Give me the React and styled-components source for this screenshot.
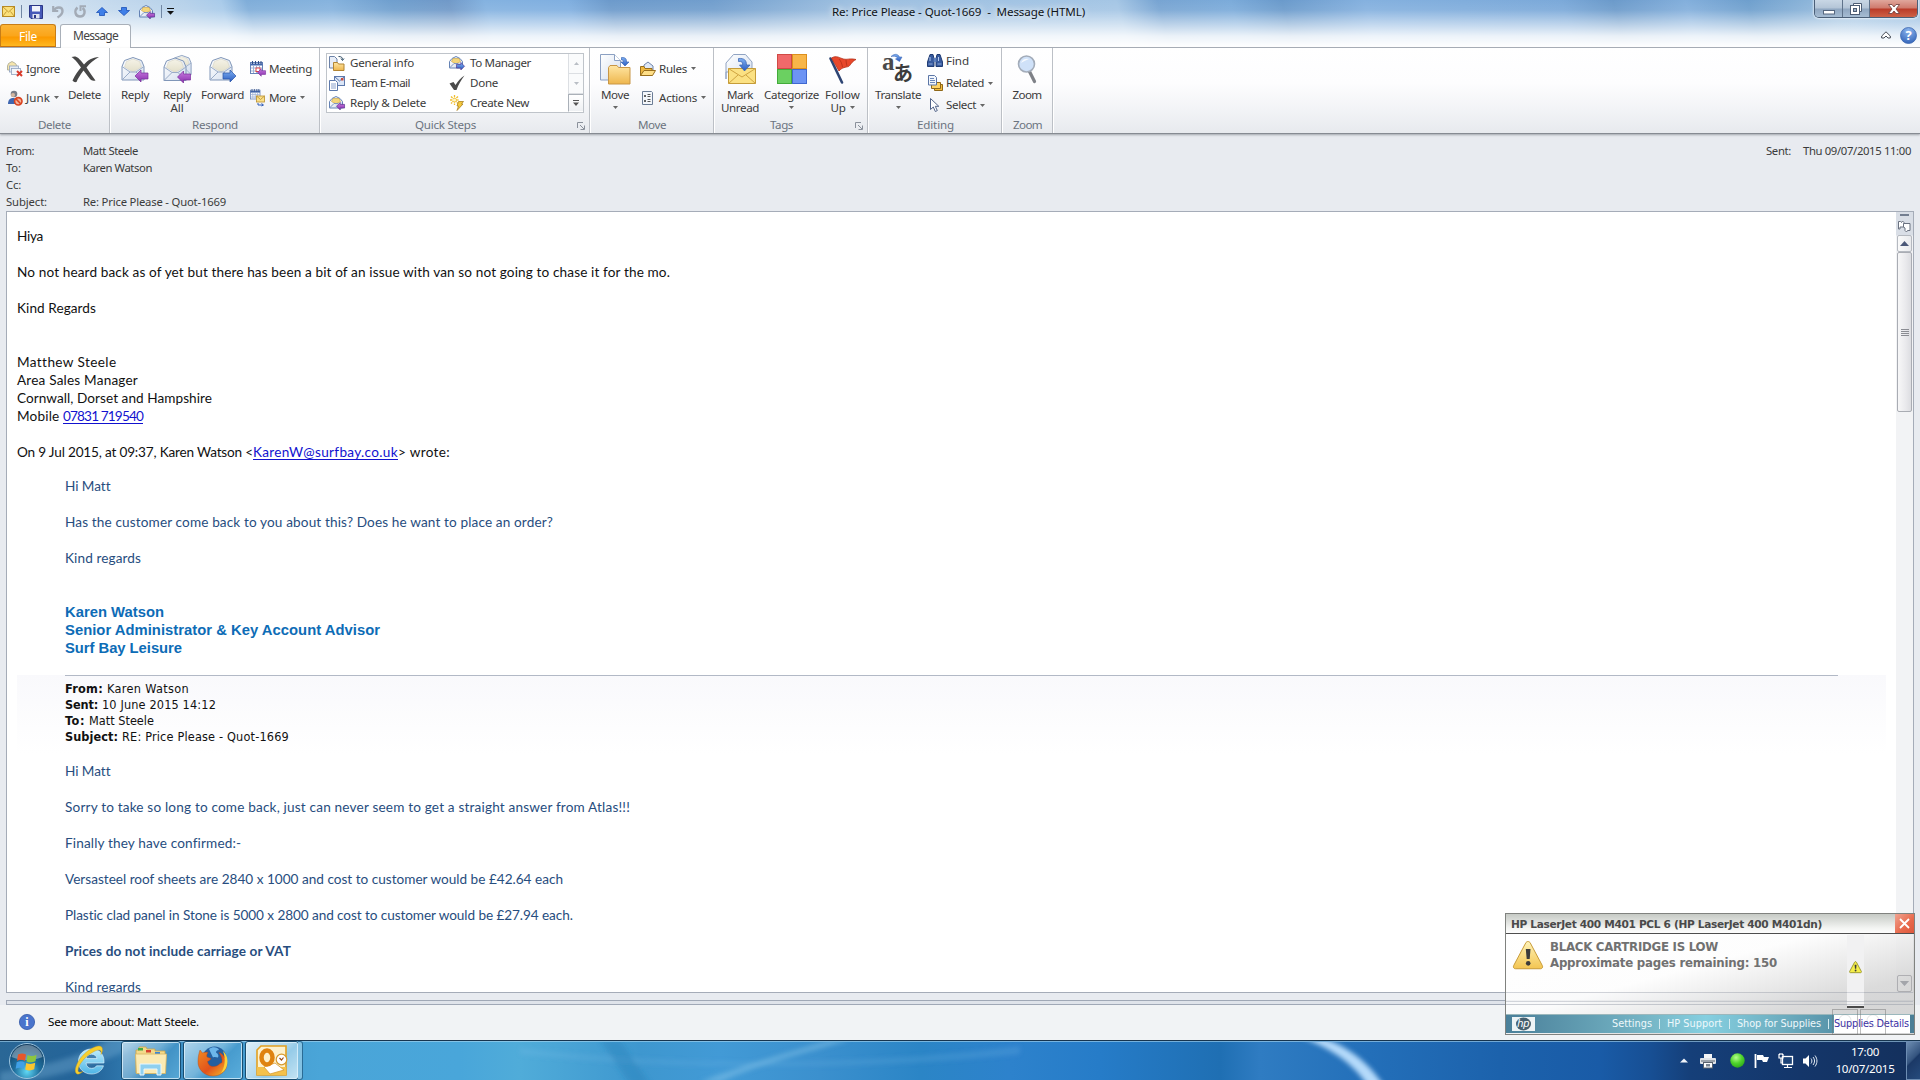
import React, { useLayoutEffect, useRef, useState } from "react";
import styled, { createGlobalStyle, css } from "styled-components";

const UI = `"Noto Sans", "Open Sans", sans-serif`;
const BODY = `Lato, "Open Sans", sans-serif`;
const TAHOMA = `"DejaVu Sans Condensed", "DejaVu Sans", sans-serif`;

const Global = createGlobalStyle`
  * { box-sizing: border-box; }
  html, body { margin: 0; padding: 0; overflow: hidden; }
  svg { display: block; flex: none; overflow: visible; }
`;

/* ---------- text that tracks itself to a measured run length ---------- */

const Run = styled.span`
  display: inline-block;
  white-space: pre;
  flex: none;
  justify-self: start;
`;

function Fit({ w, children }) {
  const ref = useRef(null);
  const [spacing, setSpacing] = useState(0);
  useLayoutEffect(() => {
    const el = ref.current;
    el.style.letterSpacing = "0px";
    const natural = el.getBoundingClientRect().width;
    const s = (w - natural) / el.textContent.length;
    el.style.letterSpacing = `${s}px`;
    setSpacing(s);
  }, [w]);
  return (
    <Run ref={ref} style={{ letterSpacing: `${spacing}px` }}>
      {children}
    </Run>
  );
}

/* ---------- window ---------- */

const Window = styled.div`
  position: relative;
  width: 1920px;
  height: 1080px;
  display: flex;
  flex-direction: column;
  overflow: hidden;
  background: #e8ebf0;
  color: #3b3b3b;
  font: 12px ${UI};
`;

const TitleArea = styled.header`
  flex: none;
  height: 48px;
  border-bottom: 1px solid #a9b0b9;
  background:
    linear-gradient(180deg, rgba(255, 255, 255, 0) 0, rgba(255, 255, 255, 0.08) 10px, rgba(255, 255, 255, 0.85) 36px, #fff 47px),
    radial-gradient(ellipse 90px 40px at 1920px 40px, rgba(90, 150, 210, 0.7), transparent),
    linear-gradient(75deg, #dbe8f3 0, #cfe0f0 60px, #b6d1ea 190px, #a9cbea 225px, #7fadd9 250px, #86b3de 330px, #6f9fce 390px,
      #7099c8 445px, #84b2e0 480px, #80afe0 560px, #6c9acb 600px, #719ecd 700px, #9dbfe0 830px, #a5c6e5 1090px, #77a4d2 1130px,
      #7babda 1200px, #6a9acb 1250px, #85b1df 1330px, #7ba9d9 1520px, #6b9aca 1570px, #83afdc 1640px, #6e9fcd 1700px,
      #a0c3e2 1800px, #b8d2e8 1920px);
`;

const TitleRow = styled.div`
  display: flex;
  height: 24px;
`;

const QuickAccess = styled.div`
  display: flex;
  align-items: center;
  width: 790px;
  padding: 0 0 1px 2px;
`;

const Slot = styled.span`
  display: flex;
  margin-left: ${(p) => p.$ml}px;
`;

const Divider = styled.i`
  width: 1px;
  height: 13px;
  background: #7288a4;
`;

const Caption = styled.div`
  flex: 1;
  padding-left: 42px;
  line-height: 23px;
  font-size: 11.6px;
  color: #101418;
  text-shadow: 0 0 6px rgba(255, 255, 255, 0.8), 0 0 8px rgba(255, 255, 255, 0.7);
`;

const WinButtons = styled.div`
  display: flex;
  width: 104px;
  height: 18px;
  margin-right: 2px;
  border: 1px solid #4b5f77;
  border-top: 0;
  border-radius: 0 0 5px 5px;
  overflow: hidden;
  box-shadow: 0 0 2px 1px rgba(255, 255, 255, 0.6);
`;

const WinButton = styled.div`
  display: flex;
  align-items: center;
  justify-content: center;
  width: ${(p) => p.$w}px;
  border-right: 1px solid #5f738b;
  background: linear-gradient(#c9d7e5 0, #b4c5d7 8px, #8fa6c0 9px, #a9bfd5 18px);
  ${(p) =>
    p.$close &&
    css`
      flex: 1;
      border-right: 0;
      background: linear-gradient(#e0a79c 0, #cf7a6c 8px, #ba3b28 9px, #d0664a 18px);
    `}
`;

const TabRow = styled.div`
  display: flex;
  height: 24px;
  align-items: flex-start;
`;

const FileTab = styled.div`
  width: 56px;
  height: 23px;
  border: 1px solid #c77d17;
  border-bottom-color: #c9720a;
  border-radius: 3px 3px 0 0;
  background: linear-gradient(#fbb436 0, #fba51a 11px, #fb9900 12px, #ffbe28 23px);
  color: #fff;
  text-align: center;
  line-height: 23px;
`;

const MessageTab = styled.div`
  width: 71px;
  height: 24px;
  margin-left: 4px;
  border: 1px solid #a9b0b9;
  border-bottom: 0;
  border-radius: 3px 3px 0 0;
  background: #fff;
  color: #444;
  text-align: center;
  line-height: 22px;
`;

const TabTools = styled.div`
  display: flex;
  align-items: center;
  gap: 9px;
  margin-left: auto;
  height: 22px;
  padding-right: 3px;
`;

/* ---------- ribbon ---------- */

const Ribbon = styled.nav`
  flex: none;
  display: flex;
  height: 86px;
  border-bottom: 1px solid #868b92;
  background: linear-gradient(#fff 0, #fdfdfe 35px, #f3f4f7 60px, #e7eaee 85px);
  box-shadow: 0 1px 2px rgba(90, 96, 104, 0.5);
  position: relative;
`;

const Group = styled.section`
  display: flex;
  flex-direction: column;
  width: ${(p) => p.$w}px;
  border-right: 1px solid #bcc0c6;
  box-shadow: 1px 0 0 #fff;
`;

const GroupBody = styled.div`
  display: flex;
  height: 69px;
`;

const GroupName = styled.div`
  display: flex;
  align-items: center;
  height: 16px;
  padding-left: ${(p) => p.$pl}px;
  color: #6b7480;
  font-size: 11.6px;
  line-height: 16px;
`;

const LauncherSlot = styled.span`
  margin-left: auto;
  margin-right: 4px;
  padding-top: 1px;
`;

const Big = styled.div`
  display: flex;
  flex-direction: column;
  align-items: center;
  width: ${(p) => p.$w}px;
  margin-left: ${(p) => p.$ml}px;
  padding-top: 5px;
  font-size: 11.6px;
  line-height: 13px;
`;

const BigIcon = styled.div`
  display: flex;
  align-items: center;
  justify-content: center;
  height: 32px;
  margin-bottom: 3px;
`;

const Line = styled.div`
  display: flex;
  align-items: center;
  gap: 4px;
  height: 13px;
`;

const Col = styled.div`
  display: flex;
  flex-direction: column;
  margin-left: ${(p) => p.$ml}px;
  padding-top: ${(p) => p.$pt}px;
  width: ${(p) => p.$w || "auto"};
`;

const Item = styled.div`
  display: flex;
  align-items: center;
  gap: 3px;
  height: ${(p) => p.$h}px;
  font-size: 11.6px;
  line-height: 14px;
`;

const ItemText = styled.span`
  display: flex;
  align-items: center;
  gap: 4px;
`;

const Gallery = styled.div`
  display: flex;
  width: 258px;
  height: 60px;
  margin: 5px 0 0 6px;
  border: 1px solid #bfc4ca;
  background: #fff;
`;

const GalleryGrid = styled.div`
  display: grid;
  grid-template-columns: 120px 120px;
  grid-auto-rows: 20px;
  width: 241px;
  padding-left: 2px;
  margin-top: -1px;
`;

const GalleryItem = styled.div`
  display: flex;
  align-items: center;
  gap: 5px;
  font-size: 11.6px;
  line-height: 20px;
`;

const GallerySide = styled.div`
  display: grid;
  grid-template-rows: 20px 20px 1fr;
  flex: 1;
`;

const GalleryStep = styled.div`
  display: flex;
  align-items: center;
  justify-content: center;
  border-left: 1px solid ${(p) => (p.$on ? "#aab0b8" : "#dcdfe3")};
  border-bottom: 1px solid ${(p) => (p.$on ? "transparent" : "#dcdfe3")};
  border-top: ${(p) => (p.$on ? "1px solid #aab0b8" : "0")};
  background: ${(p) => (p.$on ? "linear-gradient(#fff, #eef0f3)" : "#fafbfc")};
`;

/* ---------- message header ---------- */

const Meta = styled.div`
  flex: none;
  display: flex;
  justify-content: space-between;
  height: 77px;
  padding: 8px 9px 0 6px;
  font-size: 11.3px;
`;

const MetaTable = styled.div`
  display: grid;
  grid-template-columns: 77px auto;
  grid-auto-rows: 17px;
  align-content: start;
  line-height: 17px;
`;

const MetaSent = styled.div`
  display: flex;
  gap: 12px;
  line-height: 17px;
`;

/* ---------- reading pane ---------- */

const Pane = styled.main`
  flex: none;
  display: flex;
  width: 1908px;
  height: 782px;
  margin-left: 6px;
  border: 1px solid #a5acb8;
  background: #fff;
`;

const Mail = styled.div`
  flex: 1;
  height: 780px;
  overflow: hidden;
  padding: 15px 10px 0 10px;
  color: #111;
  font-family: ${BODY};
  font-size: 13.6px;
`;

const P = styled.div`
  display: flex;
  height: 18px;
  line-height: 18px;
  margin-bottom: ${(p) => p.$mb || 0}px;
`;

const Quote = styled.div`
  padding-top: ${(p) => p.$pt || 0}px;
  padding-left: 48px;
  color: #274d7e;
`;

const Signature = styled.div`
  height: 54px;
  margin: 36px 0 18px;
  color: #0d6cb6;
  font: bold 14.8px/18px "Liberation Sans", Arial, sans-serif;
`;

const QuotedBlock = styled.div`
  height: 80px;
  background: linear-gradient(#f9f9fc, #fff);
`;

const QuotedHead = styled.div`
  margin: 0 48px 0 48px;
  padding-top: 5px;
  border-top: 1px solid #b2b9c6;
  color: #111;
  font: 12.6px/16px ${TAHOMA};
`;

const HeadLine = styled.div`
  display: flex;
  gap: 4px;
  height: 16px;
`;

const Link = styled.span`
  height: 17px;
  color: #1212cf;
  border-bottom: 1px solid #1212cf;
`;

const Strong = styled.b`
  font-weight: 700;
`;

const ScrollColumn = styled.div`
  display: flex;
  flex-direction: column;
  align-items: center;
  width: 17px;
  background: linear-gradient(#d9dee6 0, #d9dee6 23px, #f2f3f5 24px);
`;

const SplitHandle = styled.i`
  width: 9px;
  height: 2px;
  margin: 2px 0 4px;
  background: #737e90;
`;

const ScrollButton = styled.div`
  display: flex;
  align-items: center;
  justify-content: center;
  width: 15px;
  height: 17px;
  margin-top: ${(p) => p.$mt};
  border: 1px solid #b5b9c0;
  border-radius: 2px;
  background: linear-gradient(90deg, #fafafa, #e9eaed);
`;

const Thumb = styled.div`
  display: flex;
  flex-direction: column;
  align-items: center;
  justify-content: center;
  gap: 1px;
  width: 15px;
  height: 160px;
  border: 1px solid #a9acb3;
  border-radius: 2px;
  background: linear-gradient(90deg, #f7f7f8, #e9e9ec 60%, #dcdde1);
`;

const Grip = styled.i`
  width: 8px;
  height: 1px;
  background: #8b8d93;
`;

const Splitter = styled.div`
  flex: none;
  height: 5px;
  margin: 7px 5px 0 6px;
  border: 1px solid #a0a8b6;
  background: #dfe3ea;
`;

const People = styled.footer`
  flex: none;
  display: flex;
  align-items: center;
  gap: 13px;
  height: 35px;
  padding: 0 0 2px 19px;
  background: #f1f3f5;
  color: #000;
  font-size: 11.6px;
  line-height: 15px;
`;

/* ---------- taskbar ---------- */

const Taskbar = styled.div`
  position: relative;
  flex: none;
  display: flex;
  height: 40px;
  border-top: 1px solid #17354f;
  box-shadow: inset 0 1px 0 rgba(170, 215, 240, 0.6);
  background: linear-gradient(90deg, #2a6796 0, #23649a 90px, #347fb4 140px, #3f94c9 200px, #4aa5d8 320px, #49a6da 460px,
    #50acd9 520px, #3e97cf 640px, #429ad6 720px, #3b90ce 820px, #2b85c6 920px, #2d82cc 1010px, #267cc8 1100px, #1f6fb3 1220px,
    #2f7cc2 1260px, #236fb9 1370px, #1c62ac 1500px, #195ba7 1600px, #174f94 1650px, #153f79 1690px, #14366a 1800px, #14305c 1920px);
`;

const WallGlow = styled.div`
  position: absolute;
  inset: 1px 0 0 0;
  overflow: hidden;
  pointer-events: none;
`;

const Dock = styled.div`
  position: relative;
  display: flex;
  align-items: center;
  padding-left: 8px;
`;

const OrbSlot = styled.div`
  width: 65px;
`;
const IeSlot = styled.div`
  width: 48px;
`;

const TaskButton = styled.div`
  display: flex;
  align-items: center;
  justify-content: center;
  width: ${(p) => p.$w}px;
  height: 39px;
  margin-right: ${(p) => p.$mr}px;
  border: 1px solid #174d70;
  border-radius: 3px;
  box-shadow: inset 0 0 0 1px rgba(225, 243, 252, 0.75);
  background: ${(p) =>
    p.$active
      ? "linear-gradient(135deg, #ddeff9 0, #b5daee 45%, #95cbe8 60%, #c5e4f3 100%)"
      : "linear-gradient(135deg, rgba(215,236,248,.75) 0, rgba(160,208,234,.55) 45%, rgba(80,160,208,.4) 60%, rgba(110,190,230,.55) 100%)"};
`;

const StackEdge = styled.div`
  width: 5px;
  height: 39px;
  margin-left: -1px;
  border: 1px solid #2a6b95;
  border-left: 0;
  border-radius: 0 3px 3px 0;
  background: #84c2e3;
`;

const Tray = styled.div`
  position: relative;
  display: flex;
  align-items: center;
  margin-left: auto;
`;

const TrayIcons = styled.div`
  display: flex;
  align-items: center;
  margin-right: 17px;
`;

const Clock = styled.div`
  display: flex;
  flex-direction: column;
  align-items: center;
  width: 60px;
  margin-right: 11px;
  padding-bottom: 1px;
  color: #fff;
  font-size: 11.6px;
  line-height: 17px;
`;

const ShowDesktop = styled.div`
  width: 14px;
  height: 39px;
  border: 1px solid #6d8db3;
  border-right: 0;
  background: linear-gradient(135deg, #6d8db2 0, #34547f 45%, #1b3967 50%, #264b7c 100%);
`;

/* ---------- printer notification ---------- */

const Toast = styled.aside`
  position: absolute;
  left: 1505px;
  top: 913px;
  width: 410px;
  height: 122px;
  display: flex;
  flex-direction: column;
  border: 1px solid #80827f;
  background: linear-gradient(165deg, rgba(255, 255, 255, 0.92) 0, rgba(253, 253, 253, 0.85) 45%, rgba(213, 213, 213, 0.86) 75%, rgba(205, 205, 205, 0.85) 100%);
`;

const ToastTitle = styled.div`
  display: flex;
  justify-content: space-between;
  height: 20px;
  padding-left: 5px;
  border-bottom: 1px solid #4e4e4e;
  background: linear-gradient(#c6cac5, #f3f4f2 14px, #fdfdfd);
  color: #4a4a4a;
  font: bold 10.6px/20px "DejaVu Sans", Verdana, sans-serif;
`;

const ToastClose = styled.div`
  display: flex;
  align-items: center;
  justify-content: center;
  width: 19px;
  height: 19px;
  background: linear-gradient(135deg, #f0a390, #e8694c 60%, #dd583c);
`;

const ToastBody = styled.div`
  display: flex;
  height: 80px;
  padding: 6px 0 0 6px;
`;

const ToastText = styled.div`
  width: 303px;
  margin-top: -1px;
  padding: 0 0 0 6px;
  color: #717171;
  font: bold 11.8px/16px "DejaVu Sans", Verdana, sans-serif;
`;

const Cartridge = styled.div`
  display: flex;
  align-items: flex-start;
  justify-content: center;
  width: 17px;
  height: 73px;
  margin: -5px 0 0 0;
  padding-top: 26px;
  border-bottom: 2px solid #4a4a4a;
  background: #f1f1f2;
`;

const ToastBar = styled.div`
  display: flex;
  align-items: center;
  height: 19px;
  padding-left: 6px;
  border-top: 1px solid #9bb7bc;
  background: linear-gradient(90deg, #4b809a 0, #5c96ac 60px, #78b9c9 150px, #85cfe0 200px, #6fb0c2 270px, #5793a9 330px, #4a7e96 400px);
  color: #eef8fb;
  font: 10.8px/18px ${TAHOMA};
`;

const BarLinks = styled.div`
  display: flex;
  align-items: center;
  gap: 7px;
  margin-left: 77px;
`;

const Tick = styled.i`
  width: 1px;
  height: 10px;
  background: #d4ebf1;
`;

const Details = styled.div`
  height: 18px;
  width: 76px;
  margin-left: 5px;
  background: #fff;
  color: #3c31a5;
`;

const GhostTiles = styled.div`
  position: absolute;
  left: 326px;
  top: 95px;
  display: flex;
  gap: 2px;
`;

const GhostTile = styled.i`
  width: 26px;
  height: 26px;
  border: 1px solid rgba(110, 110, 110, 0.45);
  background: radial-gradient(circle at 50% 45%, transparent 5px, rgba(120, 120, 120, 0.18) 6px, transparent 7px);
`;

const GhostScroll = styled.div`
  position: absolute;
  left: 391px;
  top: 61px;
  display: flex;
  align-items: center;
  justify-content: center;
  width: 15px;
  height: 17px;
  border: 1px solid rgba(140, 140, 145, 0.5);
  border-radius: 2px;
`;

const GhostLines = styled.div`
  position: absolute;
  left: 0;
  top: 78px;
  width: 407px;
  height: 13px;
  border-top: 1px solid rgba(150, 156, 168, 0.35);
  border-bottom: 1px solid rgba(150, 156, 168, 0.4);
  background: linear-gradient(transparent 8px, rgba(150, 156, 168, 0.4) 8px, rgba(150, 156, 168, 0.4) 9px, transparent 9px);
`;

/* ---------- icons ---------- */

const Caret = ({ c = "#666" }) => (
  <svg width="5" height="3" viewBox="0 0 5 3">
    <path d="M0 0h5L2.5 3z" fill={c} />
  </svg>
);

const ARROW_LEFT = "M0 6L6 0v3h7v6H6v3z";
const ARROW_RIGHT = "M13 6L7 0v3H0v6h7v3z";

const HiddenSvg = styled.svg`
  position: absolute;
`;

const Defs = () => (
  <HiddenSvg width="0" height="0">
    <defs>
      <linearGradient id="purple" x1="0" y1="0" x2="0" y2="1">
        <stop offset="0" stopColor="#c87be0" />
        <stop offset="1" stopColor="#8a2fae" />
      </linearGradient>
      <linearGradient id="blue" x1="0" y1="0" x2="0" y2="1">
        <stop offset="0" stopColor="#7fb0f2" />
        <stop offset="1" stopColor="#2a5cc0" />
      </linearGradient>
      <linearGradient id="folder" x1="0" y1="0" x2="0" y2="1">
        <stop offset="0" stopColor="#ffe6a3" />
        <stop offset="1" stopColor="#eeb64d" />
      </linearGradient>
      <linearGradient id="paper" x1="0" y1="0" x2="1" y2="1">
        <stop offset="0" stopColor="#ffffff" />
        <stop offset="1" stopColor="#d3deee" />
      </linearGradient>
      <linearGradient id="cream" x1="0" y1="0" x2="0" y2="1">
        <stop offset="0" stopColor="#f5f3e8" />
        <stop offset="1" stopColor="#e3dfc9" />
      </linearGradient>
      <radialGradient id="orb" cx=".5" cy=".8" r=".8">
        <stop offset="0" stopColor="#5fd8f5" />
        <stop offset=".45" stopColor="#1f6f9e" />
        <stop offset="1" stopColor="#123a5c" />
      </radialGradient>
      <radialGradient id="lime" cx=".4" cy=".3" r=".8">
        <stop offset="0" stopColor="#b6ff8c" />
        <stop offset=".5" stopColor="#4fd42c" />
        <stop offset="1" stopColor="#27a016" />
      </radialGradient>
      <radialGradient id="help" cx=".5" cy=".2" r=".9">
        <stop offset="0" stopColor="#8db6ee" />
        <stop offset="1" stopColor="#2a5cb4" />
      </radialGradient>
      <linearGradient id="warn" x1="0" y1="0" x2="0" y2="1">
        <stop offset="0" stopColor="#fff3b8" />
        <stop offset="1" stopColor="#f3c552" />
      </linearGradient>
      <linearGradient id="fox" x1="0" y1="0" x2="1" y2="1">
        <stop offset="0" stopColor="#f08a22" />
        <stop offset=".55" stopColor="#e2521b" />
        <stop offset="1" stopColor="#f6c12c" />
      </linearGradient>
      <linearGradient id="ie" x1="0" y1="0" x2="0" y2="1">
        <stop offset="0" stopColor="#bfeefd" />
        <stop offset="1" stopColor="#4db4e6" />
      </linearGradient>
    </defs>
  </HiddenSvg>
);

const OpenMail = ({ x = 0, y = 0, s = 1 }) => (
  <g transform={`translate(${x} ${y}) scale(${s})`}>
    <path d="M.5 9.500L3 3.500 11.500.500 20 3.500 22.500 9.500V23h-22z" fill="url(#paper)" stroke="#8096b8" />
    <path d="M3 10L5 4.500 11.500 2 18 4.500 20 10 11.500 15z" fill="url(#cream)" stroke="#d6d3c2" strokeWidth=".6" />
    <path d="M.5 9.500l8 5.500h6l8-5.500M.5 23l8-8M22.500 23l-8-8" fill="none" stroke="#9aacc8" />
  </g>
);

const SmallMail = ({ arrow, color }) => (
  <svg width="16" height="16" viewBox="0 0 16 16">
    <path d="M.5 6.500L3 3.500 7 1.500l4 2 2.500 3V13H.5z" fill="url(#paper)" stroke="#6482b4" />
    <path d="M2.500 6.500L4 3.500h6l1.500 3L7 9z" fill="#f4d67a" stroke="#caa040" strokeWidth=".6" />
    <path d="M.5 13L5 8.500h4l4.500 4.500" fill="none" stroke="#7c96c2" />
    <g transform="translate(7.500 7.500) scale(.62)">
      <path d={arrow} fill={color} stroke="#4a2a86" strokeWidth="1" />
    </g>
  </svg>
);

const ReplyIcon = () => (
  <svg width="28" height="28" viewBox="0 0 28 28">
    <OpenMail x={0.5} y={2} />
    <path transform="translate(14 15)" d={ARROW_LEFT} fill="url(#purple)" stroke="#7a2e9c" strokeWidth=".7" />
  </svg>
);
const ReplyAllIcon = () => (
  <svg width="29" height="30" viewBox="0 0 29 30">
    <OpenMail x={9} y={1} s={0.85} />
    <OpenMail x={0.5} y={3.5} />
    <path transform="translate(14.500 17)" d={ARROW_LEFT} fill="url(#purple)" stroke="#7a2e9c" strokeWidth=".7" />
  </svg>
);
const ForwardIcon = () => (
  <svg width="28" height="28" viewBox="0 0 28 28">
    <OpenMail x={0.5} y={2} />
    <path transform="translate(14 15)" d={ARROW_RIGHT} fill="url(#blue)" stroke="#2a55a8" strokeWidth=".7" />
  </svg>
);
const DeleteIcon = () => (
  <svg width="30" height="28" viewBox="0 0 30 28">
    <path d="M1.500 2C6 .5 8 1.500 14 9.500 18 5 22 2.500 29 2c-5 3-9.500 6-12.500 10.500C20 18 22.500 21.500 25.500 25.500c-3 .5-4 0-5.500-1.500l-6.500-8.500C10 20 8 23.500 6.500 27c-2 .5-3.500-.5-4-1.500C5 20 7.500 16.500 11 12.500 7.500 7.500 5.500 5 1.500 2z" fill="#474747" />
  </svg>
);
const IgnoreIcon = () => (
  <svg width="16" height="16" viewBox="0 0 16 16">
    <path d="M.5 5l1-2.500L5 .5l3.500 2L10 5v4H.5z" fill="#f5e5ac" stroke="#a6a48e" strokeWidth=".8" />
    <rect x="2.500" y="5" width="9" height="6" fill="#e4ebf5" stroke="#8fa2bf" strokeWidth=".8" />
    <rect x="4.500" y="7.500" width="9" height="6" fill="#f4f7fb" stroke="#8fa2bf" strokeWidth=".8" />
    <path d="M10 10l5 5M15 10l-5 5" stroke="#d93a2b" strokeWidth="2" />
  </svg>
);
const JunkIcon = () => (
  <svg width="16" height="16" viewBox="0 0 16 16">
    <circle cx="7" cy="4" r="3.300" fill="#777c85" />
    <circle cx="6" cy="5" r="2" fill="#d6b7a0" />
    <path d="M1 14c0-4 2-6 5-6s5 2 5 6z" fill="#3f66b0" />
    <circle cx="11.300" cy="11.300" r="3.700" fill="#f5b39c" stroke="#d9431f" strokeWidth="1.600" />
    <path d="M9 9l4.700 4.700" stroke="#d9431f" strokeWidth="1.600" />
  </svg>
);
const Calendar = () => (
  <>
    <rect x=".5" y="1.500" width="12" height="11" fill="#fff" stroke="#6683b8" />
    <path d="M.5 2.500h12v2H.5z" fill="#4468ad" />
    <path d="M2.500 0v3M5.500 0v3M8.500 0v3M11 0v3" stroke="#2f4c86" />
    <path d="M1 7h11M1 10h11M3.500 5v7M6.500 5v7M9.500 5v7" stroke="#9fb2d6" />
  </>
);
const MeetingIcon = () => (
  <svg width="16" height="16" viewBox="0 0 16 16">
    <Calendar />
    <rect x="6" y="7" width="4" height="3.500" fill="#fff" stroke="#d44" />
    <path transform="translate(7.500 7.800) scale(.62)" d={ARROW_LEFT} fill="url(#purple)" stroke="#7a2e9c" />
  </svg>
);
const MoreIcon = () => (
  <svg width="16" height="17" viewBox="0 0 16 17">
    <g transform="scale(.8)">
      <Calendar />
    </g>
    <rect x="6.500" y="7" width="8" height="6" fill="#fbe08a" stroke="#b98e2c" strokeWidth=".8" />
    <path d="M6.500 7l4 3.500 4-3.500" fill="none" stroke="#b98e2c" strokeWidth=".8" />
    <path d="M8 14v2h5M11.500 14.500L13.500 16l-2 1" fill="none" stroke="#2f5cb8" />
  </svg>
);
const CopyMoveIcon = () => (
  <svg width="16" height="16" viewBox="0 0 16 16">
    <path d="M.5 1.500h5l2.500 2.500v9H.5z" fill="#e7edf7" stroke="#6c82a8" />
    <path d="M9.500 1.500c3 0 4 1 4 3M12 3.500l1.500 2 1.500-2" fill="none" stroke="#2c4a63" />
    <path d="M4.500 7.500h4l1 1.500H15v6.500H4.500z" fill="url(#folder)" stroke="#b28533" />
  </svg>
);
const TeamIcon = () => (
  <svg width="16" height="16" viewBox="0 0 16 16">
    <rect x="5.500" y="1.500" width="10" height="9" fill="#dbe6f7" stroke="#5d79ab" />
    <path d="M5.500 1.500l5 4.500 5-4.500" fill="none" stroke="#5d79ab" />
    <rect x="12" y="3" width="2.500" height="2.500" fill="#c84a3e" />
    <path d="M.5 5.500h6l2 2v8h-8z" fill="#fff" stroke="#5d79ab" />
    <path d="M2 9h5M2 11h5M2 13h5" stroke="#8ba2cc" />
  </svg>
);
const CheckIcon = () => (
  <svg width="16" height="16" viewBox="0 0 16 16">
    <path d="M.5 8.500l4-1.500 2 3C9 6 11.500 3 15.500.500 12 5 9.500 9.500 7.500 15H5z" fill="#4b4b4b" />
  </svg>
);
const CreateIcon = () => (
  <svg width="16" height="16" viewBox="0 0 16 16">
    <path d="M5.500 0v10M1 5h9M2 1.500l7 7M9 1.500l-7 7" stroke="#efbd2d" strokeWidth="1.300" strokeDasharray="2.200 .6" />
    <circle cx="5.500" cy="5" r="1.600" fill="#fff6c8" />
    <path d="M9.500 6.500h5L12.500 9H14l-6 6.500L9.500 11H8z" fill="#f5c93b" stroke="#a98122" strokeWidth=".8" />
  </svg>
);
const MoveIcon = () => (
  <svg width="31" height="31" viewBox="0 0 31 31">
    <path d="M.5.500h14l6 6v19.500H.5z" fill="url(#paper)" stroke="#8ba0c2" />
    <path d="M14.500.500v6h6" fill="#fff" stroke="#8ba0c2" />
    <path d="M21.500 3.500c4 0 5 1 5 4.500h2.500l-4 4-4-4h2.500c0-1.500-.5-2-2-2z" fill="url(#blue)" stroke="#3a66b5" strokeWidth=".7" />
    <path d="M8.500 13.500l1.500-2h7l1.500 2h11.500v16.500H8.500z" fill="url(#folder)" stroke="#c89646" />
  </svg>
);
const RulesIcon = () => (
  <svg width="16" height="16" viewBox="0 0 16 16">
    <path d="M4 8V4l4-3 5 4v4" fill="#dfe8f6" stroke="#6d83ab" />
    <path d="M.5 5.500h3.500l1 2h7v7H.5z" fill="#f0b942" stroke="#9a6f1c" />
    <path d="M.5 14.500L4 9.500h11.500l-3 5z" fill="#ffdf87" stroke="#9a6f1c" />
  </svg>
);
const ActionsIcon = () => (
  <svg width="16" height="16" viewBox="0 0 16 16">
    <path d="M2.500 1.500h9l1 1v12h-10z" fill="#f4f7fb" stroke="#6b7c95" />
    <circle cx="5" cy="6" r="1" fill="#333" />
    <circle cx="5" cy="11" r="1" fill="#333" />
    <path d="M7.500 4.500h3M7.500 6.500h3M7.500 9.500h3M7.500 11.500h3" stroke="#555" />
  </svg>
);
const UnreadIcon = () => (
  <svg width="31" height="31" viewBox="0 0 31 31">
    <path d="M1 25V9L8.500.5h12L27 8v10H1z" fill="url(#paper)" stroke="#90a3c2" />
    <path d="M3.500 14.500h27v15h-27z" fill="#fbe183" stroke="#c59c39" />
    <path d="M3.500 14.500L17 23l13.500-8.500M3.500 29.500l9.500-8.500M30.500 29.500L21 21" fill="none" stroke="#cfa441" />
    <path d="M13.500 4.500c6-.5 8 2 8 6.500h3.500l-5.500 6-5-6h3.200c0-3-1-4-4.200-3.500z" fill="url(#blue)" stroke="#335fae" strokeWidth=".7" />
  </svg>
);
const CategorizeIcon = () => (
  <svg width="30" height="30" viewBox="0 0 30 30">
    <rect x=".5" y=".5" width="14" height="14" fill="#f0696a" stroke="#d04a45" />
    <rect x="15.500" y=".5" width="14" height="14" fill="#f8b649" stroke="#dd8f1c" />
    <rect x=".5" y="15.500" width="14" height="14" fill="#6bd061" stroke="#42ab3a" />
    <rect x="15.500" y="15.500" width="14" height="14" fill="#6d94f4" stroke="#3f68d0" />
  </svg>
);
const FlagIcon = () => (
  <svg width="28" height="29" viewBox="0 0 28 29">
    <path d="M1.500 3.500l11.500 24" stroke="#2d4473" strokeWidth="2.600" strokeLinecap="round" />
    <path d="M2.500 3c5-3 8 0 12 1s6-1 12.500.5C22 7 22 10 19.500 11.500c-3 1-6 .5-9.500 4.500z" fill="#e8472a" stroke="#b42f16" strokeWidth=".8" />
    <path d="M10 4c2 2 3 5 3.500 8M17 5c0 2 .5 4 1 6" stroke="#b42f16" strokeWidth=".8" fill="none" />
  </svg>
);
const LatinGlyph = styled.text`
  font: bold 25px "Liberation Serif", "Times New Roman", serif;
  fill: #4a4a4a;
`;
const KanaGlyph = styled.text`
  font: bold 20px "Noto Sans CJK JP", sans-serif;
  fill: #3c3c3c;
`;
const TranslateIcon = () => (
  <svg width="32" height="32" viewBox="0 0 32 32">
    <LatinGlyph x="0" y="17">a</LatinGlyph>
    <KanaGlyph x="11" y="28">あ</KanaGlyph>
    <path d="M9 3.500C13 0 16 1 17.500 4H20l-2.500 4.500L13.500 6l2-1C14 3 12 3 9 3.500z" fill="url(#blue)" stroke="#335fae" strokeWidth=".5" />
  </svg>
);
const FindIcon = () => (
  <svg width="16" height="16" viewBox="0 0 16 16">
    <path d="M3 1.500h3l1 4v8H.5V9zM13 1.500h-3l-1 4v8h6.500V9z" fill="#375a9e" stroke="#203c74" />
    <rect x="6.500" y="5" width="3" height="4" fill="#5f80bd" />
    <path d="M3 4v4M11.500 4v4" stroke="#b5c9ec" />
    <path d="M1.500 11h4M10.500 11h4" stroke="#8fa9d8" />
  </svg>
);
const RelatedIcon = () => (
  <svg width="16" height="16" viewBox="0 0 16 16">
    <path d="M7.500 8.500h3l1 1h4v6h-8z" fill="#f4bd3b" stroke="#8f6819" />
    <path d="M4.500 6.500h3l1 1h5v6h-9z" fill="#ffd466" stroke="#8f6819" />
    <path d="M1.500.5h6l2 2v7.500h-8z" fill="#f2f6fc" stroke="#5c76a6" />
    <path d="M3 3.500h4M3 5.500h5M3 7.500h5" stroke="#6d88ba" />
  </svg>
);
const SelectIcon = () => (
  <svg width="16" height="16" viewBox="0 0 16 16">
    <path d="M3.500 1.500v11l2.800-2.500 2 4.500 2-.9-2-4.300h3.500z" fill="#fff" stroke="#53658a" />
  </svg>
);
const ZoomIcon = () => (
  <svg width="20" height="29" viewBox="0 0 20 29">
    <path d="M12.500 16.500l5 10" stroke="#7e8187" strokeWidth="3.200" strokeLinecap="round" />
    <circle cx="9.500" cy="9" r="8" fill="#cfe1f8" stroke="#a3acb9" strokeWidth="1.600" />
    <path d="M4 8c1-4 5-5 8-4-3 1-6 3-8 4z" fill="#fff" opacity=".8" />
  </svg>
);
const Launcher = () => (
  <svg width="8" height="8" viewBox="0 0 8 8">
    <path d="M.5 6V.5H6M3 3l4 4M7.500 3.500v4h-4" fill="none" stroke="#8a919b" />
  </svg>
);

const AppMail = () => (
  <svg width="13" height="12" viewBox="0 0 13 12">
    <rect x=".5" y=".5" width="12" height="10" fill="#fbe07a" stroke="#b78a24" />
    <path d="M.5.5l6 5.500 6-5.500M.5 10.500l4-5M12.500 10.500l-4-5" fill="none" stroke="#b78a24" strokeWidth=".8" />
  </svg>
);
const SaveIcon = () => (
  <svg width="14" height="14" viewBox="0 0 14 14">
    <path d="M.5.500h13v13H2L.5 12z" fill="#4659b8" stroke="#2b3786" />
    <rect x="3" y="1" width="8" height="5.500" fill="#f0f3fb" />
    <rect x="3.500" y="9" width="7" height="4.500" fill="#dfe4ef" />
    <rect x="5" y="10" width="2" height="3" fill="#2b3786" />
  </svg>
);
const UndoIcon = () => (
  <svg width="12" height="13" viewBox="0 0 12 13">
    <path d="M1.200 1v5h5" fill="none" stroke="#a3abb6" strokeWidth="2.200" />
    <path d="M2 5.500C4 1.500 10.500 1.500 10.500 6c0 3-1.500 4.500-5 6.500" fill="none" stroke="#a3abb6" strokeWidth="2.400" />
  </svg>
);
const RedoIcon = () => (
  <svg width="12" height="13" viewBox="0 0 12 13">
    <path d="M3.500 2.500C0 5.500 1 11.500 6 11.500s6-6 2.500-8.500" fill="none" stroke="#a3abb6" strokeWidth="2.400" />
    <path d="M6.500 6V1.200H12" fill="none" stroke="#a3abb6" strokeWidth="2" />
  </svg>
);
const UpArrow = () => (
  <svg width="12" height="9" viewBox="0 0 12 9">
    <path d="M6 .5L11.500 5.500H8.500V8.500h-5v-3H.5z" fill="#3f7fe8" stroke="#1d52b8" strokeWidth=".8" />
  </svg>
);
const DownArrow = () => (
  <svg width="12" height="9" viewBox="0 0 12 9">
    <path d="M6 8.500L11.500 3.500H8.500V.5h-5v3H.5z" fill="#3f7fe8" stroke="#1d52b8" strokeWidth=".8" />
  </svg>
);
const Customize = () => (
  <svg width="7" height="7" viewBox="0 0 7 7">
    <path d="M0 .5h7" stroke="#111" />
    <path d="M0 3h7L3.500 6.800z" fill="#111" />
  </svg>
);
const MinGlyph = () => (
  <svg width="12" height="14" viewBox="0 0 12 14">
    <rect x=".5" y="8.500" width="11" height="3.500" fill="#fff" stroke="#56677e" />
  </svg>
);
const MaxGlyph = () => (
  <svg width="12" height="12" viewBox="0 0 12 12">
    <path d="M3.500 2.500v-2h8v8h-2" fill="#fff" stroke="#4d5d74" />
    <rect x=".5" y="2.500" width="9" height="9" fill="#fff" stroke="#4d5d74" />
    <rect x="3.500" y="5.500" width="3" height="3" fill="#9fb2c8" stroke="#4d5d74" />
  </svg>
);
const CloseGlyph = () => (
  <svg width="12" height="10" viewBox="0 0 12 10">
    <path d="M.5.500h3.500l2 2.500L8 .5h3.500L8 5l3.500 4.500H8L6 7 4 9.500H.500L4 5z" fill="#fff" stroke="#6b3a3a" strokeWidth=".8" />
  </svg>
);
const CollapseGlyph = () => (
  <svg width="10" height="8" viewBox="0 0 10 8">
    <path d="M5 .8L9.300 5v2H7L5 5 3 7H.7V5z" fill="#fff" stroke="#444b55" strokeWidth="1" />
  </svg>
);
const HelpText = styled.text`
  font: bold 13px ${UI};
  fill: #fff;
  text-anchor: middle;
`;
const HelpGlyph = () => (
  <svg width="17" height="17" viewBox="0 0 17 17">
    <circle cx="8.500" cy="8.500" r="8" fill="url(#help)" stroke="#3d68b0" strokeWidth=".8" />
    <HelpText x="8.500" y="13.200">?</HelpText>
  </svg>
);
const InfoText = styled.text`
  font: bold 12px "Liberation Serif", serif;
  fill: #fff;
  text-anchor: middle;
`;
const InfoGlyph = () => (
  <svg width="16" height="16" viewBox="0 0 16 16">
    <circle cx="8" cy="8" r="7.600" fill="#4a74cc" stroke="#3459a8" strokeWidth=".8" />
    <InfoText x="8" y="12">i</InfoText>
  </svg>
);
const BrowseGlyph = () => (
  <svg width="13" height="13" viewBox="0 0 13 13">
    <path d="M.5 1.500h2l1 1 1-1.500 1.500 1.500V7h-4v2H.5z" fill="#fff" stroke="#6b7280" />
    <path d="M5.500 3.500h6.500v7H9.500l-1 1.500-1.500-1.500V8L5.500 7z" fill="#fff" stroke="#6b7280" />
  </svg>
);
const ScrollArrow = ({ down, c = "#4b5878" }) => (
  <svg width="9" height="5" viewBox="0 0 9 5">
    <path d={down ? "M0 0h9L4.500 5z" : "M0 5h9L4.500 0z"} fill={c} />
  </svg>
);

const Orb = () => (
  <svg width="38" height="38" viewBox="0 0 38 38">
    <circle cx="19" cy="19" r="17.500" fill="url(#orb)" stroke="#9cc4de" strokeWidth="1" />
    <path d="M3.500 15a16 16 0 0 1 31 0c-9 4-22 4-31 0z" fill="#fff" opacity=".33" />
    <path d="M10 12.500c3-1.500 5.500-1.500 8 0l-1 6.500c-2.500-1.500-5-1.500-8-.2z" fill="#e8572b" />
    <path d="M19.500 13c3 1.500 6 1.500 9-.3l-1 6.500c-3 1.500-6 1.500-9 .2z" fill="#8dc63f" />
    <path d="M8.700 20.300c3-1.300 5.500-1.300 8 .2l-1 6.500c-2.500-1.500-5-1.500-8-.2z" fill="#3fa0e6" />
    <path d="M18.200 21c3 1.300 6 1.300 9-.2l-1 6.500c-3 1.500-6 1.500-9 .2z" fill="#fbc62e" />
  </svg>
);
const IeIcon = () => (
  <svg width="34" height="34" viewBox="0 0 34 34">
    <path d="M31 19H13c.3 3.500 2.500 5.300 5.500 5.300 2.300 0 4-.8 5-2.500h7C28.800 26.800 24.500 30 18.500 30 11 30 5.500 25 5.500 17.500S11 5 18.500 5 31 10 31 17.500zM13 14.500h11C23.500 11.800 21.500 10.200 18.500 10.200S13.500 11.800 13 14.500z" fill="url(#ie)" stroke="#e7f8ff" strokeWidth=".6" fillRule="evenodd" />
    <path d="M4 30C-1 27 6 12 17 5.500c7-4.500 13-5 12.500 1-.2 1.500-.7 3-1.500 4 1-4-1-6-7-3C12 12 5 21 5 26.500c0 2 2 2 5 1C7.500 29.500 5.500 30.500 4 30z" fill="#f7cf2d" stroke="#c9941a" strokeWidth=".4" />
  </svg>
);
const ExplorerIcon = () => (
  <svg width="34" height="30" viewBox="0 0 34 30">
    <path d="M2 4h3V1h7l1 2h8v2h10v22H2z" fill="#f3d98a" stroke="#c9a24a" strokeWidth=".8" />
    <rect x="4" y="2" width="5" height="2.500" fill="#49a942" />
    <rect x="12" y="4" width="5" height="2.500" fill="#d8412f" />
    <rect x="21" y="6" width="5" height="2.500" fill="#3a86d8" />
    <path d="M1.500 8H32.500l-1 19.500h-29z" fill="#fbeab3" stroke="#d7b561" strokeWidth=".8" />
    <path d="M6 18h21v11h-4v-6H10v6H6z" fill="#8fd0ef" stroke="#e7f7ff" strokeWidth="1" />
  </svg>
);
const FirefoxIcon = () => (
  <svg width="32" height="32" viewBox="0 0 32 32">
    <circle cx="17.500" cy="13.500" r="12" fill="#255f9f" />
    <path d="M12 4c4-3 9-1.500 10 1-2 0-3 1-3 2.500 2 1 3 3 2 5-2 0-3-1-5 0z" fill="#6db6ea" />
    <path d="M3 5l2.500 3C7 7 9 7 11 7.500 10 9 9.500 10 10 12l4 1.500c-.5 1.500-2 2.200-3.500 3C11 20 14 22 17 21.500c4 0 5-3 8-4 .5-4-1-7-3-10 6 2.500 9 9 7.500 14.500C27.500 28 22 31 16 31 7 31 .5 24 1 16c0-4 1-8 2-11z" fill="url(#fox)" stroke="#b6420f" strokeWidth=".4" />
    <path d="M26 6c5 4 5.500 12 3 17-1 2-3 4-5 5 4-6 5-14 2-22z" fill="#fbd13a" />
  </svg>
);
const OutlookIcon = () => (
  <svg width="32" height="32" viewBox="0 0 32 32">
    <path d="M1 5l4-4h25v29H1z" fill="#fdf1cd" stroke="#e2a020" strokeWidth="1.600" />
    <path d="M1 22h29v8H1z" fill="#f4c14b" />
    <path d="M8 22l11-4 9 7-14 4z" fill="#fff" stroke="#d69b31" strokeWidth=".8" />
    <ellipse cx="11" cy="12.500" rx="5.500" ry="7" fill="none" stroke="#df8310" strokeWidth="4.500" />
    <circle cx="25.500" cy="14.500" r="5.300" fill="#fff" stroke="#d69b31" strokeWidth="1.200" />
    <path d="M23.500 13l2 2 2-2.500" fill="none" stroke="#9a4b16" strokeWidth="1.200" />
  </svg>
);

const PrinterIcon = () => (
  <svg width="16" height="16" viewBox="0 0 16 16">
    <rect x="4" y="1" width="8" height="4" fill="#f4f6f8" />
    <rect x="0" y="5" width="16" height="6" rx="1" fill="#dfe3e8" />
    <path d="M1 8h14" stroke="#59626e" />
    <rect x="3.500" y="9.500" width="9" height="5.500" fill="#fff" stroke="#59626e" />
    <rect x="6" y="11" width="4" height="2.500" fill="#7a8592" />
  </svg>
);
const GreenIcon = () => (
  <svg width="15" height="15" viewBox="0 0 15 15">
    <circle cx="7.500" cy="7.500" r="7.200" fill="url(#lime)" />
  </svg>
);
const ActionFlag = () => (
  <svg width="15" height="16" viewBox="0 0 15 16">
    <path d="M1.500 1v14" stroke="#fff" strokeWidth="1.800" />
    <path d="M3 2h6l1 2h5l-2 5H9L8 7H3z" fill="#fff" />
  </svg>
);
const NetIcon = () => (
  <svg width="16" height="16" viewBox="0 0 16 16">
    <rect x="4.500" y="3.500" width="10" height="8" fill="#1d4377" stroke="#fff" strokeWidth="1.300" />
    <path d="M9.500 12v2M6 14.500h8M1 1v4h4V1M3 5v5h1.500M2 0v2M4 0v2" fill="none" stroke="#fff" strokeWidth="1.200" />
  </svg>
);
const SpeakerIcon = () => (
  <svg width="16" height="16" viewBox="0 0 16 16">
    <path d="M1 5.500h2.500L7 2v12l-3.500-3.500H1z" fill="#fff" />
    <path d="M9 5.500c1.200 1.500 1.200 3.500 0 5M11 4c2 2.500 2 5.500 0 8M13 2.500c2.600 3.500 2.600 7.500 0 11" fill="none" stroke="#e3ebf4" strokeWidth="1" />
  </svg>
);
const TrayArrow = () => (
  <svg width="8" height="5" viewBox="0 0 8 5">
    <path d="M0 4.500h8L4 .5z" fill="#f1f5fa" />
  </svg>
);
const WarnIcon = ({ w, fill = "url(#warn)", stroke = "#c89b39", sw = 1 }) => (
  <svg width={w} height={w * 0.94} viewBox="0 0 32 30">
    <path d="M16 1.500c1 0 1.800.5 2.300 1.500l12 22.500c.8 1.700 0 3.200-1.800 3.200h-25c-1.800 0-2.600-1.500-1.800-3.200L13.700 3c.5-1 1.300-1.500 2.300-1.500z" fill={fill} stroke={stroke} strokeWidth={sw} />
    <path d="M13.800 9h4.700l-.8 10h-3z" fill="#3b3b3b" />
    <circle cx="16.200" cy="23.300" r="2.300" fill="#3b3b3b" />
  </svg>
);
const HpText = styled.text`
  font: italic 11px "Liberation Sans", Arial, sans-serif;
  fill: #fff;
  text-anchor: middle;
`;
const HpIcon = () => (
  <svg width="23" height="14" viewBox="0 0 23 14">
    <rect width="23" height="14" fill="#eef4f6" />
    <ellipse cx="11.500" cy="7" rx="7.500" ry="6.400" fill="#46606f" />
    <HpText x="11.300" y="10">hp</HpText>
  </svg>
);
const ToastX = () => (
  <svg width="11" height="11" viewBox="0 0 11 11">
    <path d="M1 1l9 9M10 1l-9 9" stroke="#fff" strokeWidth="1.800" />
  </svg>
);

/* ---------- composed controls ---------- */

const BigButton = ({ w, ml, icon, lines, caret }) => (
  <Big $w={w} $ml={ml}>
    <BigIcon>{icon}</BigIcon>
    {lines.map(([text, tw], i) => (
      <Line key={text}>
        <Fit w={tw}>{text}</Fit>
        {caret === "inline" && i === lines.length - 1 && <Caret />}
      </Line>
    ))}
    {caret === "below" && (
      <Line>
        <Caret />
      </Line>
    )}
  </Big>
);

const SmallButton = ({ h, icon, text, w, caret }) => (
  <Item $h={h}>
    {icon}
    <ItemText>
      <Fit w={w}>{text}</Fit>
      {caret && <Caret />}
    </ItemText>
  </Item>
);

const RibbonGroup = ({ w, name, nameW, pl, launcher, children }) => (
  <Group $w={w}>
    <GroupBody>{children}</GroupBody>
    <GroupName $pl={pl}>
      <Fit w={nameW}>{name}</Fit>
      {launcher && (
        <LauncherSlot>
          <Launcher />
        </LauncherSlot>
      )}
    </GroupName>
  </Group>
);

const QUICK_STEPS = [
  ["General info", 64, <CopyMoveIcon />],
  ["To Manager", 61, <SmallMail arrow={ARROW_RIGHT} color="url(#blue)" />],
  ["Team E-mail", 60, <TeamIcon />],
  ["Done", 28, <CheckIcon />],
  ["Reply & Delete", 76, <SmallMail arrow={ARROW_LEFT} color="url(#purple)" />],
  ["Create New", 59, <CreateIcon />],
];

const META = [
  ["From:", 28, "Matt Steele", 55],
  ["To:", 15, "Karen Watson", 69],
  ["Cc:", 15, "", 0],
  ["Subject:", 41, "Re: Price Please - Quot-1669", 143],
];

const QUOTED_HEAD = [
  ["From:", 38, "Karen Watson", 82],
  ["Sent:", 33, "10 June 2015 14:12", 114],
  ["To:", 20, "Matt Steele", 65],
  ["Subject:", 53, "RE: Price Please - Quot-1669", 167],
];

const QUOTED_TEXT = [
  ["Hi Matt", 45],
  ["Sorry to take so long to come back, just can never seem to get a straight answer from Atlas!!!", 565],
  ["Finally they have confirmed:-", 176],
  ["Versasteel roof sheets are 2840 x 1000 and cost to customer would be £42.64 each", 498],
  ["Plastic clad panel in Stone is 5000 x 2800 and cost to customer would be £27.94 each.", 508],
];

export default function App() {
  return (
    <Window>
      <Global />
      <Defs />
      <TitleArea>
        <TitleRow>
          <QuickAccess>
            <AppMail />
            <Slot $ml={6}><Divider /></Slot>
            <Slot $ml={7}><SaveIcon /></Slot>
            <Slot $ml={9}><UndoIcon /></Slot>
            <Slot $ml={10}><RedoIcon /></Slot>
            <Slot $ml={10}><UpArrow /></Slot>
            <Slot $ml={10}><DownArrow /></Slot>
            <Slot $ml={9}><SmallMail arrow={ARROW_LEFT} color="url(#purple)" /></Slot>
            <Slot $ml={6}><Divider /></Slot>
            <Slot $ml={5}><Customize /></Slot>
          </QuickAccess>
          <Caption>
            <Fit w={253}>Re: Price Please - Quot-1669  -  Message (HTML)</Fit>
          </Caption>
          <WinButtons>
            <WinButton $w={28}><MinGlyph /></WinButton>
            <WinButton $w={27}><MaxGlyph /></WinButton>
            <WinButton $close><CloseGlyph /></WinButton>
          </WinButtons>
        </TitleRow>
        <TabRow>
          <FileTab><Fit w={18}>File</Fit></FileTab>
          <MessageTab><Fit w={45}>Message</Fit></MessageTab>
          <TabTools>
            <CollapseGlyph />
            <HelpGlyph />
          </TabTools>
        </TabRow>
      </TitleArea>

      <Ribbon>
        <RibbonGroup w={110} name="Delete" nameW={33} pl={38}>
          <Col $ml={7} $pt={6} $w="61px">
            <SmallButton h={29} icon={<IgnoreIcon />} text="Ignore" w={34} />
            <SmallButton h={29} icon={<JunkIcon />} text="Junk" w={24} caret />
          </Col>
          <BigButton w={33} ml={0} icon={<DeleteIcon />} lines={[["Delete", 33]]} />
        </RibbonGroup>
        <RibbonGroup w={210} name="Respond" nameW={46} pl={82}>
          <BigButton w={32} ml={9} icon={<ReplyIcon />} lines={[["Reply", 28]]} />
          <BigButton w={32} ml={10} icon={<ReplyAllIcon />} lines={[["Reply", 28], ["All", 13]]} />
          <BigButton w={43} ml={8} icon={<ForwardIcon />} lines={[["Forward", 43]]} />
          <Col $ml={6} $pt={6}>
            <SmallButton h={29} icon={<MeetingIcon />} text="Meeting" w={43} />
            <SmallButton h={29} icon={<MoreIcon />} text="More" w={27} caret />
          </Col>
        </RibbonGroup>
        <RibbonGroup w={270} name="Quick Steps" nameW={61} pl={95} launcher>
          <Gallery>
            <GalleryGrid>
              {QUICK_STEPS.map(([text, w, icon]) => (
                <GalleryItem key={text}>
                  {icon}
                  <Fit w={w}>{text}</Fit>
                </GalleryItem>
              ))}
            </GalleryGrid>
            <GallerySide>
              <GalleryStep><svg width="5" height="3" viewBox="0 0 5 3"><path d="M0 3h5L2.500 0z" fill="#b9bec5" /></svg></GalleryStep>
              <GalleryStep><Caret c="#b9bec5" /></GalleryStep>
              <GalleryStep $on><svg width="6" height="6" viewBox="0 0 6 6"><path d="M0 0h6v1H0zM0 2.500h6L3 6z" fill="#555" /></svg></GalleryStep>
            </GallerySide>
          </Gallery>
        </RibbonGroup>
        <RibbonGroup w={124} name="Move" nameW={28} pl={48}>
          <BigButton w={30} ml={10} icon={<MoveIcon />} lines={[["Move", 28]]} caret="below" />
          <Col $ml={10} $pt={6}>
            <SmallButton h={29} icon={<RulesIcon />} text="Rules" w={28} caret />
            <SmallButton h={29} icon={<ActionsIcon />} text="Actions" w={38} caret />
          </Col>
        </RibbonGroup>
        <RibbonGroup w={154} name="Tags" nameW={23} pl={56} launcher>
          <BigButton w={38} ml={7} icon={<UnreadIcon />} lines={[["Mark", 26], ["Unread", 38]]} />
          <BigButton w={55} ml={5} icon={<CategorizeIcon />} lines={[["Categorize", 55]]} caret="below" />
          <BigButton w={35} ml={6} icon={<FlagIcon />} lines={[["Follow", 35], ["Up", 15]]} caret="inline" />
        </RibbonGroup>
        <RibbonGroup w={134} name="Editing" nameW={37} pl={49}>
          <BigButton w={46} ml={7} icon={<TranslateIcon />} lines={[["Translate", 46]]} caret="below" />
          <Col $ml={6} $pt={2}>
            <SmallButton h={22} icon={<FindIcon />} text="Find" w={23} />
            <SmallButton h={22} icon={<RelatedIcon />} text="Related" w={38} caret />
            <SmallButton h={22} icon={<SelectIcon />} text="Select" w={30} caret />
          </Col>
        </RibbonGroup>
        <RibbonGroup w={51} name="Zoom" nameW={29} pl={11}>
          <BigButton w={30} ml={10} icon={<ZoomIcon />} lines={[["Zoom", 29]]} />
        </RibbonGroup>
      </Ribbon>

      <Meta>
        <MetaTable>
          {META.map(([label, lw, value, vw]) => (
            <React.Fragment key={label}>
              <Fit w={lw}>{label}</Fit>
              {value ? <Fit w={vw}>{value}</Fit> : <span />}
            </React.Fragment>
          ))}
        </MetaTable>
        <MetaSent>
          <Fit w={25}>Sent:</Fit>
          <Fit w={108}>Thu 09/07/2015 11:00</Fit>
        </MetaSent>
      </Meta>

      <Pane>
        <Mail>
          <P $mb={18}><Fit w={26}>Hiya</Fit></P>
          <P $mb={18}><Fit w={653}>No not heard back as of yet but there has been a bit of an issue with van so not going to chase it for the mo.</Fit></P>
          <P $mb={36}><Fit w={79}>Kind Regards</Fit></P>
          <P><Fit w={99}>Matthew Steele</Fit></P>
          <P><Fit w={121}>Area Sales Manager</Fit></P>
          <P><Fit w={195}>Cornwall, Dorset and Hampshire</Fit></P>
          <P $mb={18}>
            <Fit w={46}>Mobile </Fit>
            <Link><Fit w={80}>07831 719540</Fit></Link>
          </P>
          <P $mb={16}>
            <Fit w={236}>{"On 9 Jul 2015, at 09:37, Karen Watson <"}</Fit>
            <Link><Fit w={145}>KarenW@surfbay.co.uk</Fit></Link>
            <Fit w={52}>{"> wrote:"}</Fit>
          </P>
          <Quote>
            <P $mb={18}><Fit w={45}>Hi Matt</Fit></P>
            <P $mb={18}><Fit w={488}>Has the customer come back to you about this? Does he want to place an order?</Fit></P>
            <P><Fit w={76}>Kind regards</Fit></P>
            <Signature>
              <P><Fit w={99}>Karen Watson</Fit></P>
              <P><Fit w={315}>Senior Administrator & Key Account Advisor</Fit></P>
              <P><Fit w={117}>Surf Bay Leisure</Fit></P>
            </Signature>
          </Quote>
          <QuotedBlock>
            <QuotedHead>
              {QUOTED_HEAD.map(([label, lw, value, vw]) => (
                <HeadLine key={label}>
                  <Strong><Fit w={lw}>{label}</Fit></Strong>
                  <Fit w={vw}>{value}</Fit>
                </HeadLine>
              ))}
            </QuotedHead>
          </QuotedBlock>
          <Quote $pt={7}>
            {QUOTED_TEXT.map(([text, w]) => (
              <P key={text} $mb={18}><Fit w={w}>{text}</Fit></P>
            ))}
            <P $mb={18}><Strong><Fit w={226}>Prices do not include carriage or VAT</Fit></Strong></P>
            <P><Fit w={76}>Kind regards</Fit></P>
          </Quote>
        </Mail>
        <ScrollColumn>
          <SplitHandle />
          <BrowseGlyph />
          <ScrollButton $mt="2px"><ScrollArrow /></ScrollButton>
          <Thumb>
            <Grip /><Grip /><Grip /><Grip />
          </Thumb>
          <ScrollButton $mt="auto"><ScrollArrow down /></ScrollButton>
        </ScrollColumn>
      </Pane>

      <Splitter />
      <People>
        <InfoGlyph />
        <Fit w={151}>See more about: Matt Steele.</Fit>
      </People>

      <Taskbar>
        <WallGlow>
          <svg width="1920" height="38" viewBox="0 0 1920 38">
            <defs>
              <filter id="soft" x="-20%" y="-50%" width="140%" height="200%">
                <feGaussianBlur stdDeviation="2.500" />
              </filter>
            </defs>
            <g filter="url(#soft)">
              <path d="M1303 -4C1335 8 1355 24 1368 44h16C1368 20 1350 6 1323 -4z" fill="#b5dafa" />
              <path d="M830-2C790 10 740 24 700 40h20c40-18 80-28 130-42z" fill="#8ac6ea" opacity=".5" />
              <path d="M520 6c150 20 350 18 500-2v8C870 28 670 28 520 12z" fill="#8cc8ec" opacity=".18" />
              <path d="M620-2l30 44h-20L600-2z" fill="#2680b8" opacity=".4" />
              <path d="M0 30C60 22 90 10 110-4h40C110 20 60 36 0 42z" fill="#7fb8de" opacity=".35" />
            </g>
          </svg>
        </WallGlow>
        <Dock>
          <OrbSlot><Orb /></OrbSlot>
          <IeSlot><IeIcon /></IeSlot>
          <TaskButton $w={60} $mr={2}><ExplorerIcon /></TaskButton>
          <TaskButton $w={60} $mr={2}><FirefoxIcon /></TaskButton>
          <TaskButton $w={54} $mr={0} $active><OutlookIcon /></TaskButton>
          <StackEdge />
        </Dock>
        <Tray>
          <TrayIcons>
            <TrayArrow />
            <Slot $ml={12}><PrinterIcon /></Slot>
            <Slot $ml={14}><GreenIcon /></Slot>
            <Slot $ml={9}><ActionFlag /></Slot>
            <Slot $ml={9}><NetIcon /></Slot>
            <Slot $ml={8}><SpeakerIcon /></Slot>
          </TrayIcons>
          <Clock>
            <Fit w={28}>17:00</Fit>
            <Fit w={59}>10/07/2015</Fit>
          </Clock>
          <ShowDesktop />
        </Tray>
      </Taskbar>

      <Toast>
        <ToastTitle>
          <Fit w={311}>HP LaserJet 400 M401 PCL 6 (HP LaserJet 400 M401dn)</Fit>
          <ToastClose><ToastX /></ToastClose>
        </ToastTitle>
        <ToastBody>
          <WarnIcon w={32} />
          <ToastText>
            <div><Fit w={168}>BLACK CARTRIDGE IS LOW</Fit></div>
            <div><Fit w={227}>Approximate pages remaining: 150</Fit></div>
          </ToastText>
          <Cartridge><WarnIcon w={13} fill="#f5ee4a" stroke="#8d8a20" sw={2} /></Cartridge>
        </ToastBody>
        <ToastBar>
          <HpIcon />
          <BarLinks>
            <Fit w={40}>Settings</Fit>
            <Tick />
            <Fit w={55}>HP Support</Fit>
            <Tick />
            <Fit w={84}>Shop for Supplies</Fit>
            <Tick />
          </BarLinks>
          <Details><Fit w={75}>Supplies Details</Fit></Details>
        </ToastBar>
        <GhostLines />
        <GhostScroll><ScrollArrow down c="#a3a5aa" /></GhostScroll>
        <GhostTiles><GhostTile /><GhostTile /></GhostTiles>
      </Toast>
    </Window>
  );
}
